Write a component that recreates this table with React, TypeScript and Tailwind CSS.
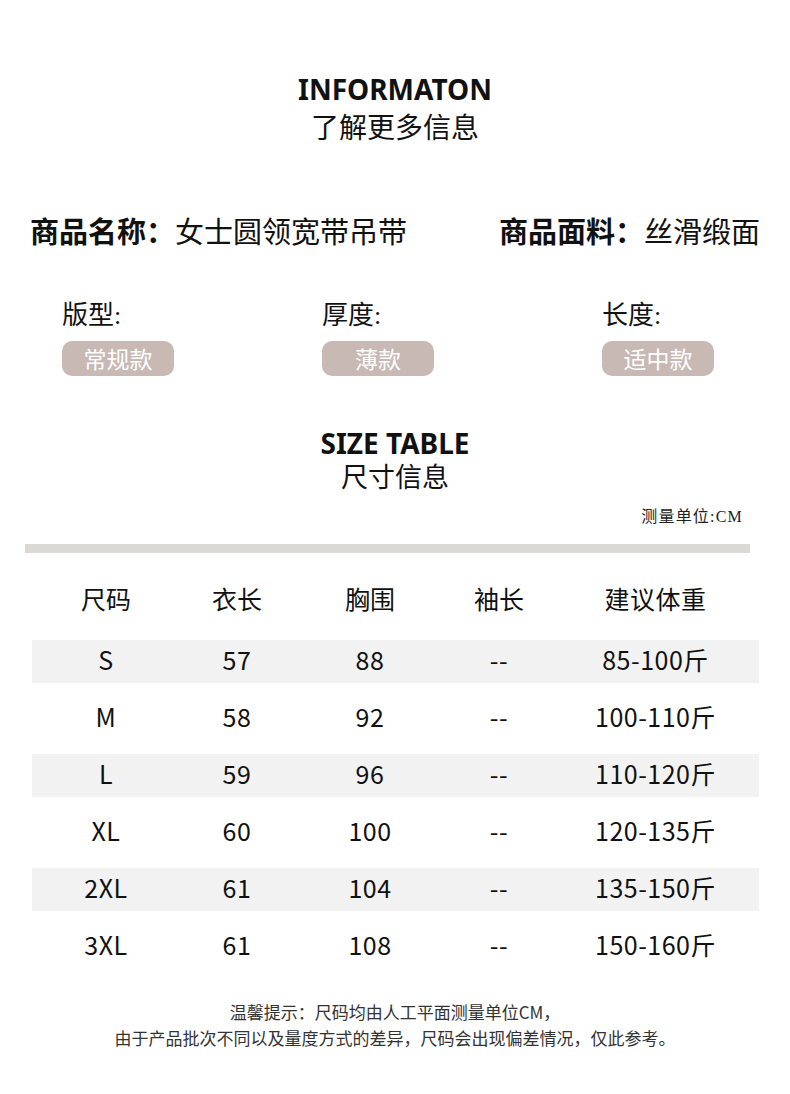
import React from "react";

const sans = { fontFamily: '"Noto Sans CJK SC", "Noto Sans", sans-serif' };
const serif = { fontFamily: '"Liberation Serif", "Noto Sans CJK SC", serif' };

const rows = [
  ["S", "57", "88", "--", "85-100斤"],
  ["M", "58", "92", "--", "100-110斤"],
  ["L", "59", "96", "--", "110-120斤"],
  ["XL", "60", "100", "--", "120-135斤"],
  ["2XL", "61", "104", "--", "135-150斤"],
  ["3XL", "61", "108", "--", "150-160斤"],
];

const cols = "grid grid-cols-[148px_114px_152px_106px_207px]";

function Pill({ label, text }: { label: string; text: string }) {
  return (
    <div className="flex flex-col">
      <div className="text-[26px] leading-[30px] text-[#111]" style={serif}>{label}</div>
      <div className="mt-[10px] w-[112px] h-[35px] rounded-[10px] bg-[#c8b9b4] flex items-center justify-center text-white text-[23px] leading-none">
        {text}
      </div>
    </div>
  );
}

export default function App() {
  return (
    <div className="w-[790px] h-[1094px] bg-white text-[#111] overflow-hidden" style={sans}>
      <div className="pt-[72px] flex flex-col items-center">
        <div className="text-[28px] font-bold leading-[34px]" style={{ fontFamily: '"Noto Sans", sans-serif' }}>INFORMATON</div>
        <div className="text-[28px] leading-[36px] mt-[2px]">了解更多信息</div>
      </div>

      <div className="mt-[68px] flex justify-between pl-[30px] pr-[30px] text-[29px] leading-[36px]">
        <div><span className="font-bold">商品名称：</span>女士圆领宽带吊带</div>
        <div><span className="font-bold">商品面料：</span>丝滑缎面</div>
      </div>

      <div className="mt-[53px] flex pl-[62px]">
        <div className="w-[260px] shrink-0"><Pill label="版型:" text="常规款" /></div>
        <div className="w-[280px] shrink-0"><Pill label="厚度:" text="薄款" /></div>
        <div className="shrink-0"><Pill label="长度:" text="适中款" /></div>
      </div>

      <div className="mt-[53px] flex flex-col items-center">
        <div className="text-[28px] font-bold leading-[28px]" style={{ fontFamily: '"Noto Sans", sans-serif' }}>SIZE TABLE</div>
        <div className="text-[27px] leading-[34px] mt-[2px]">尺寸信息</div>
      </div>

      <div className="flex justify-end pr-[47px] mt-[14px]">
        <div className="text-[16px] leading-[20px] text-[#222] tracking-[1.2px]" style={serif}>测量单位:CM</div>
      </div>

      <div className="mt-[17px] ml-[25px] w-[725px] h-[9px] bg-[#dad9d4]" />

      <div className="ml-[32px] w-[727px] text-[25px] text-[#111]">
        <div className={`${cols} mt-[26px] mb-[18px] h-[43px] items-center text-center`}>
          <div className="leading-none pb-[4px]">尺码</div>
          <div className="leading-none pb-[4px]">衣长</div>
          <div className="leading-none pb-[4px]">胸围</div>
          <div className="leading-none pb-[4px]">袖长</div>
          <div className="leading-none pb-[4px] tracking-[0.5px]">建议体重</div>
        </div>
        <div className="flex flex-col gap-[14px]">
          {rows.map((r, i) => (
            <div key={i} className={`${cols} h-[43px] items-center text-center ${i % 2 === 0 ? "bg-[#f2f2f2]" : ""}`}>
              {r.map((c, j) => (
                <div key={j} className="leading-none pb-[4px] tracking-[0.5px]">{c}</div>
              ))}
            </div>
          ))}
        </div>
      </div>

      <div className="mt-[31px] flex flex-col items-center text-[17px] leading-[26px] text-[#333]">
        <div>温馨提示：尺码均由人工平面测量单位CM，</div>
        <div>由于产品批次不同以及量度方式的差异，尺码会出现偏差情况，仅此参考。</div>
      </div>
    </div>
  );
}
